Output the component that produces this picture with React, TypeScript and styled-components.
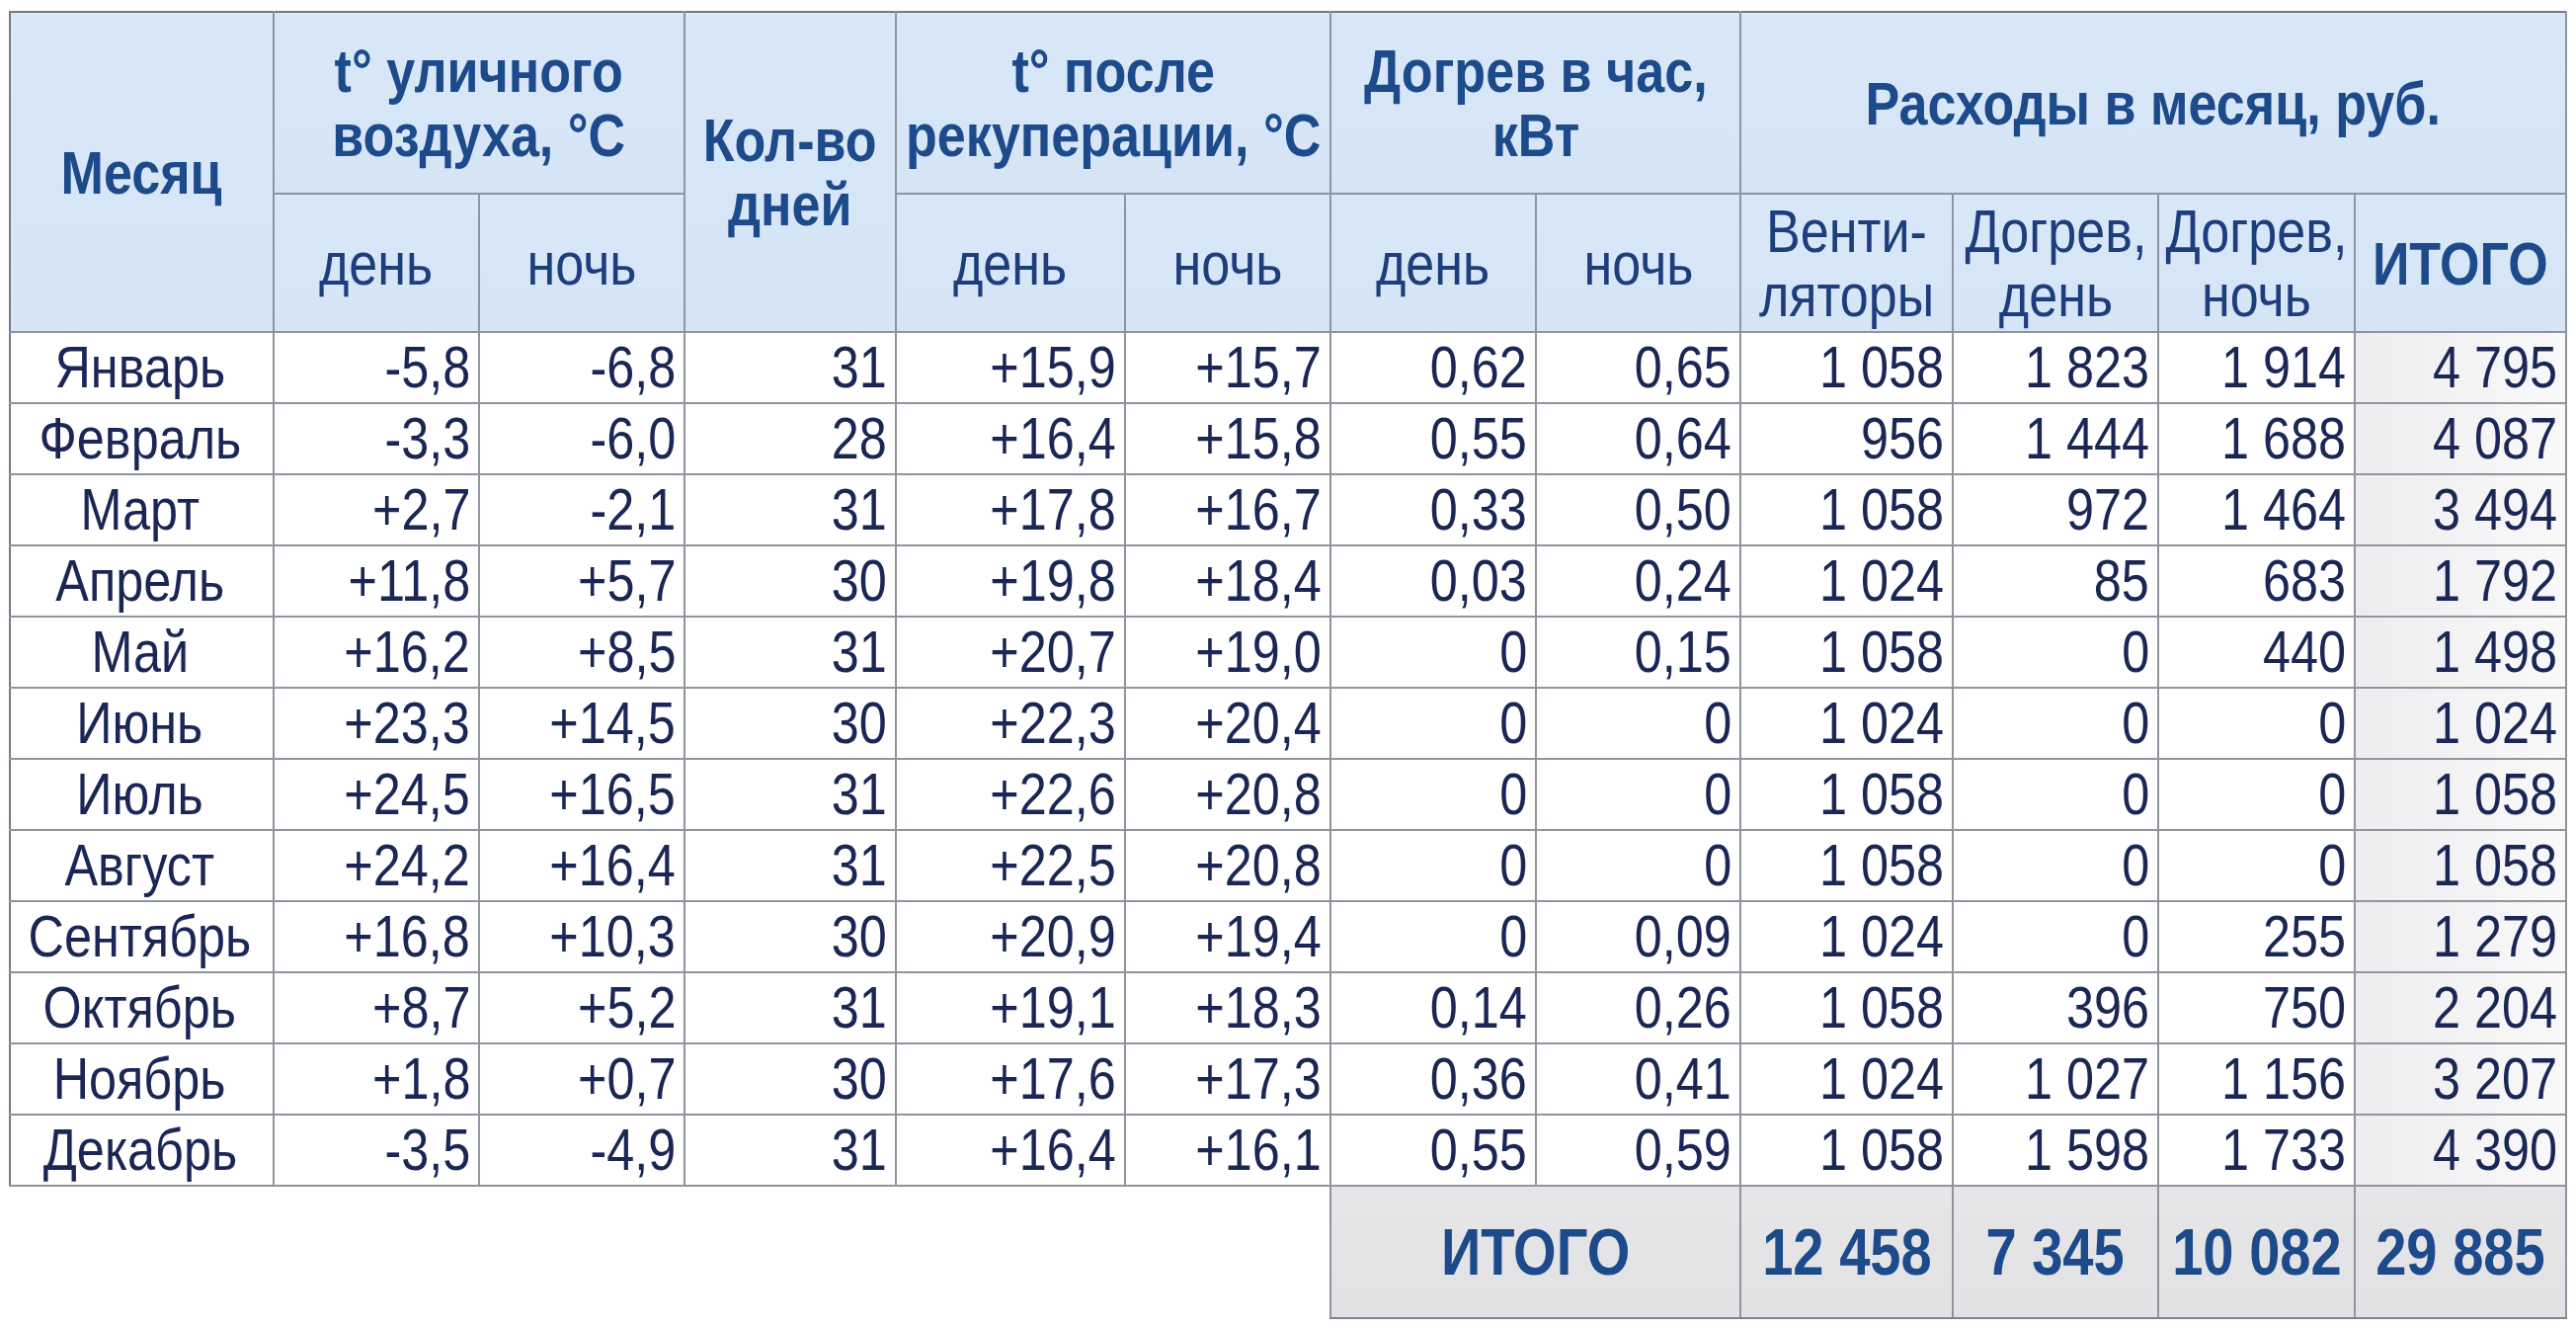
import React from "react";
import styled, { createGlobalStyle } from "styled-components";

const Global = createGlobalStyle`
  html, body { margin: 0; padding: 0; background: #ffffff; }
  body { font-family: "Liberation Sans", Arial, sans-serif; }
`;

const Page = styled.div`
  padding: 11px 0 0 9px;
  width: 2608px;
  height: 1344px;
  box-sizing: border-box;
  overflow: hidden;
`;

const Table = styled.table`
  border-collapse: collapse;
  table-layout: fixed;
  width: 2588px;
  font-family: "Liberation Sans", Arial, sans-serif;
`;

/* condensed text: Arial-like glyphs narrowed as in the reference */
const Txt = styled.span<{ $align?: "center" | "right"; $sx?: number }>`
  display: inline-block;
  white-space: nowrap;
  transform: scaleX(${(p) => p.$sx ?? 0.84});
  transform-origin: ${(p) => (p.$align === "right" ? "right center" : "center center")};
  margin: ${(p) => (p.$align === "right" ? "0 0 0 -60px" : "0 -60px")};
`;

const HeadCell = styled.th<{ $bold?: boolean; $h: number; $edge?: boolean }>`
  height: ${(p) => p.$h}px;
  padding: 0 2px;
  background: linear-gradient(180deg, #d9e8f8 0%, #d5e5f6 100%);
  border: 2px solid #8e959e;
  border-top-color: #747b85;
  color: ${(p) => (p.$bold ? "#1c4a8a" : "#1d3d7c")};
  font-weight: ${(p) => (p.$bold ? 700 : 400)};
  font-size: 62px;
  line-height: 65px;
  text-align: center;
  vertical-align: middle;
  white-space: nowrap;
  &:first-child { border-left-color: ${(p) => (p.$edge ? "#747b85" : "#8e959e")}; }
`;

const Cell = styled.td<{ $align?: "center" | "right"; $total?: boolean }>`
  height: 70px;
  padding: 0 8px 0 4px;
  border: 2px solid #8e959e;
  background: ${(p) =>
    p.$total ? "linear-gradient(90deg, #ededef 0%, #f9f9fa 100%)" : "#ffffff"};
  color: #1a2756;
  font-size: 60px;
  line-height: 62px;
  text-align: ${(p) => p.$align || "right"};
  white-space: nowrap;
  vertical-align: middle;
  &:first-child { border-left-color: #747b85; }
`;

const Blank = styled.td`
  border: none;
  background: transparent;
`;

const SumCell = styled.td`
  height: 132px;
  padding: 0 4px;
  border: 2px solid #8e959e;
  border-bottom-color: #7d848e;
  background: linear-gradient(180deg, #e6e6e8 0%, #e2e2e4 100%);
  color: #1c4a8a;
  font-weight: 700;
  font-size: 66px;
  text-align: center;
  white-space: nowrap;
  vertical-align: middle;
`;

const Body = styled.tbody`
  & > tr:first-child > * { border-top-color: #7a818b; }
`;

const widths = [267, 208, 208, 214, 232, 208, 208, 207, 215, 208, 199, 214];

const rows: string[][] = [
  ["Январь", "-5,8", "-6,8", "31", "+15,9", "+15,7", "0,62", "0,65", "1 058", "1 823", "1 914", "4 795"],
  ["Февраль", "-3,3", "-6,0", "28", "+16,4", "+15,8", "0,55", "0,64", "956", "1 444", "1 688", "4 087"],
  ["Март", "+2,7", "-2,1", "31", "+17,8", "+16,7", "0,33", "0,50", "1 058", "972", "1 464", "3 494"],
  ["Апрель", "+11,8", "+5,7", "30", "+19,8", "+18,4", "0,03", "0,24", "1 024", "85", "683", "1 792"],
  ["Май", "+16,2", "+8,5", "31", "+20,7", "+19,0", "0", "0,15", "1 058", "0", "440", "1 498"],
  ["Июнь", "+23,3", "+14,5", "30", "+22,3", "+20,4", "0", "0", "1 024", "0", "0", "1 024"],
  ["Июль", "+24,5", "+16,5", "31", "+22,6", "+20,8", "0", "0", "1 058", "0", "0", "1 058"],
  ["Август", "+24,2", "+16,4", "31", "+22,5", "+20,8", "0", "0", "1 058", "0", "0", "1 058"],
  ["Сентябрь", "+16,8", "+10,3", "30", "+20,9", "+19,4", "0", "0,09", "1 024", "0", "255", "1 279"],
  ["Октябрь", "+8,7", "+5,2", "31", "+19,1", "+18,3", "0,14", "0,26", "1 058", "396", "750", "2 204"],
  ["Ноябрь", "+1,8", "+0,7", "30", "+17,6", "+17,3", "0,36", "0,41", "1 024", "1 027", "1 156", "3 207"],
  ["Декабрь", "-3,5", "-4,9", "31", "+16,4", "+16,1", "0,55", "0,59", "1 058", "1 598", "1 733", "4 390"],
];

const nb = (s: string) => s.replace(/ /g, "\u00a0");

const H = ({ children }: { children: React.ReactNode }) => <Txt>{children}</Txt>;

export default function App() {
  return (
    <Page>
      <Global />
      <Table>
        <colgroup>
          {widths.map((w, i) => (
            <col key={i} style={{ width: w }} />
          ))}
        </colgroup>
        <thead>
          <tr>
            <HeadCell $bold $edge $h={182} rowSpan={2}>
              <H>Месяц</H>
            </HeadCell>
            <HeadCell $bold $h={182} colSpan={2}>
              <H>
                t° уличного
                <br />
                воздуха, °С
              </H>
            </HeadCell>
            <HeadCell $bold $h={182} rowSpan={2}>
              <H>
                Кол-во
                <br />
                дней
              </H>
            </HeadCell>
            <HeadCell $bold $h={182} colSpan={2}>
              <H>
                t° после
                <br />
                рекуперации, °С
              </H>
            </HeadCell>
            <HeadCell $bold $h={182} colSpan={2}>
              <H>
                Догрев в час,
                <br />
                кВт
              </H>
            </HeadCell>
            <HeadCell $bold $h={182} colSpan={4}>
              <H>Расходы в месяц, руб.</H>
            </HeadCell>
          </tr>
          <tr>
            <HeadCell $h={138}><H>день</H></HeadCell>
            <HeadCell $h={138}><H>ночь</H></HeadCell>
            <HeadCell $h={138}><H>день</H></HeadCell>
            <HeadCell $h={138}><H>ночь</H></HeadCell>
            <HeadCell $h={138}><H>день</H></HeadCell>
            <HeadCell $h={138}><H>ночь</H></HeadCell>
            <HeadCell $h={138}>
              <H>
                Венти-
                <br />
                ляторы
              </H>
            </HeadCell>
            <HeadCell $h={138}>
              <H>
                Догрев,
                <br />
                день
              </H>
            </HeadCell>
            <HeadCell $h={138}>
              <H>
                Догрев,
                <br />
                ночь
              </H>
            </HeadCell>
            <HeadCell $bold $h={138}>
              <H>ИТОГО</H>
            </HeadCell>
          </tr>
        </thead>
        <Body>
          {rows.map((r) => (
            <tr key={r[0]}>
              {r.map((v, i) => {
                const align = i === 0 ? "center" : "right";
                return (
                  <Cell key={i} $align={align} $total={i === 11}>
                    <Txt $align={align}>{nb(v)}</Txt>
                  </Cell>
                );
              })}
            </tr>
          ))}
          <tr>
            <Blank colSpan={6} />
            <SumCell colSpan={2}><Txt $sx={0.85}>ИТОГО</Txt></SumCell>
            <SumCell><Txt $sx={0.85}>{nb("12 458")}</Txt></SumCell>
            <SumCell><Txt $sx={0.85}>{nb("7 345")}</Txt></SumCell>
            <SumCell><Txt $sx={0.85}>{nb("10 082")}</Txt></SumCell>
            <SumCell><Txt $sx={0.85}>{nb("29 885")}</Txt></SumCell>
          </tr>
        </Body>
      </Table>
    </Page>
  );
}
